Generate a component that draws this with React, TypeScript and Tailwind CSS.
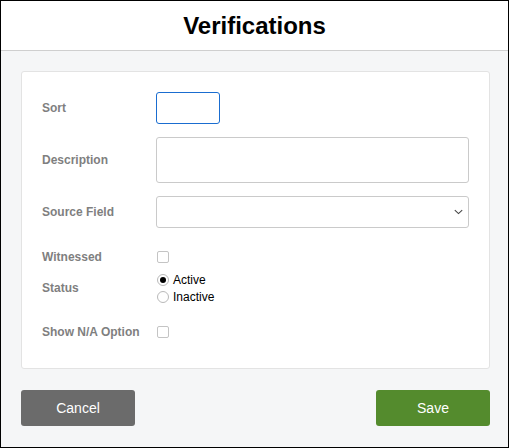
const Label = ({ children }: { children: React.ReactNode }) => (
  <div className="w-[114px] shrink-0 text-[12px] font-bold text-[#7f7f7f] -mt-[1px]">{children}</div>
);

const Checkbox = () => (
  <span className="block w-[12px] h-[12px] border border-[#c4c4c4] rounded-[2px] bg-white" />
);

const Radio = ({ checked }: { checked?: boolean }) => (
  <span className="flex items-center justify-center w-[12px] h-[12px] rounded-full border border-[#b9b9b9] bg-white">
    {checked && <span className="block w-[6px] h-[6px] rounded-full bg-black" />}
  </span>
);

export default function App() {
  return (
    <div
      className="w-[509px] h-[448px] border border-black flex flex-col bg-white overflow-hidden"
      style={{ fontFamily: '"Liberation Sans", Arial, sans-serif' }}
    >
      <div className="h-[50px] shrink-0 border-b border-[#cfcfcf] flex items-center justify-center">
        <h1 className="text-[24px] font-bold text-black">Verifications</h1>
      </div>
      <div className="flex-1 bg-[#f5f6f7] pt-[20px] pl-[20px] pr-[18px]">
        <div className="w-[469px] h-[298px] bg-white border border-[#e3e3e3] rounded-[3px] pt-[20px] pl-[20px] pr-[20px]">
          <div className="flex items-center h-[32px]">
            <Label>Sort</Label>
            <div className="w-[64px] h-[32px] border border-[#1a6dd0] rounded-[3px] bg-white" />
          </div>
          <div className="flex items-center h-[46px] mt-[13px]">
            <Label>Description</Label>
            <div className="flex-1 h-[46px] border border-[#cacaca] rounded-[3px] bg-white" />
          </div>
          <div className="flex items-center h-[32px] mt-[13px]">
            <Label>Source Field</Label>
            <div className="flex-1 h-[32px] border border-[#cacaca] rounded-[3px] bg-white flex items-center justify-end pr-[5px]">
              <svg width="9" height="6" viewBox="0 0 9 6" fill="none">
                <path d="M0.8 1.2 L4.5 4.6 L8.2 1.2" stroke="#444" strokeWidth="1.1" />
              </svg>
            </div>
          </div>
          <div className="flex items-center h-[12px] mt-[23px]">
            <Label>Witnessed</Label>
            <span className="ml-[1px]"><Checkbox /></span>
          </div>
          <div className="flex items-center h-[34px] mt-[8px]">
            <Label>Status</Label>
            <div className="flex flex-col ml-[1px] text-[12px] text-black">
              <div className="flex items-center gap-[4px] h-[17px]">
                <Radio checked />
                <span>Active</span>
              </div>
              <div className="flex items-center gap-[4px] h-[17px]">
                <Radio />
                <span>Inactive</span>
              </div>
            </div>
          </div>
          <div className="flex items-center h-[12px] mt-[21px]">
            <Label>Show N/A Option</Label>
            <span className="ml-[1px]"><Checkbox /></span>
          </div>
        </div>
        <div className="flex justify-between mt-[21px]">
          <button className="w-[114px] h-[36px] rounded-[3px] bg-[#6b6b6b] text-white text-[14px]">Cancel</button>
          <button className="w-[114px] h-[36px] rounded-[3px] bg-[#548b2d] text-white text-[14px]">Save</button>
        </div>
      </div>
    </div>
  );
}
